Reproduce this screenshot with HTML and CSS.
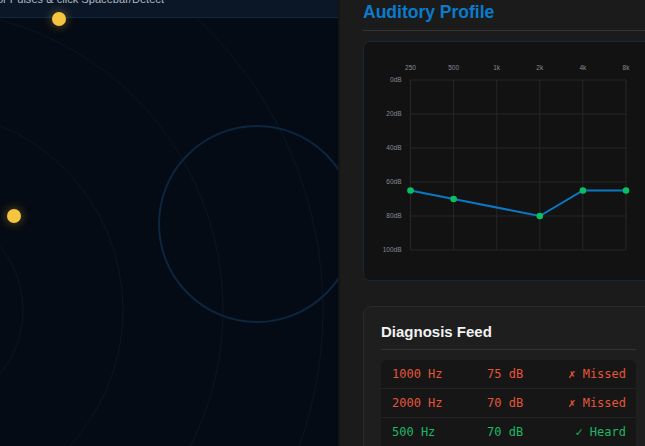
FILE: index.html
```html
<!DOCTYPE html>
<html lang="en">
<head>
    <meta charset="UTF-8">
    <meta name="viewport" content="width=device-width, initial-scale=1.0">
    <title>Hearing Test</title>
    <link rel="stylesheet" href="styles.css">
</head>
<body>

    <div class="app">
        <!-- radar / listening area -->
        <div class="radar">
            <div class="radar-bar">
                <span class="radar-hint">Listen for Pulses &amp; click Spacebar/Detect</span>
            </div>
            <svg class="radar-rings" width="338" height="446" viewBox="0 0 338 446">
                <circle cx="-77" cy="310" r="100" />
                <circle cx="-77" cy="310" r="200" />
                <circle cx="-77" cy="310" r="300" />
                <circle cx="-77" cy="310" r="400" />
                <circle class="target" cx="257" cy="224" r="98" />
            </svg>
            <div class="pulse" style="left: 52px; top: 12px;"></div>
            <div class="pulse" style="left: 7px; top: 209px;"></div>
        </div>

        <div class="side">
            <h2 class="side-title">Auditory Profile</h2>

            <div class="chart-card">
                <svg class="chart" width="290" height="238" viewBox="0 0 290 238">
                    <g class="grid">
                        <line x1="46.5" y1="38" x2="46.5" y2="208" />
                        <line x1="89.6" y1="38" x2="89.6" y2="208" />
                        <line x1="132.7" y1="38" x2="132.7" y2="208" />
                        <line x1="175.8" y1="38" x2="175.8" y2="208" />
                        <line x1="218.9" y1="38" x2="218.9" y2="208" />
                        <line x1="262" y1="38" x2="262" y2="208" />
                        <line x1="46.5" y1="38" x2="262" y2="38" />
                        <line x1="46.5" y1="72" x2="262" y2="72" />
                        <line x1="46.5" y1="106" x2="262" y2="106" />
                        <line x1="46.5" y1="140" x2="262" y2="140" />
                        <line x1="46.5" y1="174" x2="262" y2="174" />
                        <line x1="46.5" y1="208" x2="262" y2="208" />
                    </g>
                    <g class="xlabels">
                        <text x="46.5" y="26">250</text>
                        <text x="89.6" y="26">500</text>
                        <text x="132.7" y="26">1k</text>
                        <text x="175.8" y="26">2k</text>
                        <text x="218.9" y="26">4k</text>
                        <text x="262" y="26">8k</text>
                    </g>
                    <g class="ylabels">
                        <text x="37.5" y="38">0dB</text>
                        <text x="37.5" y="72">20dB</text>
                        <text x="37.5" y="106">40dB</text>
                        <text x="37.5" y="140">60dB</text>
                        <text x="37.5" y="174">80dB</text>
                        <text x="37.5" y="208">100dB</text>
                    </g>
                    <polyline class="curve" points="46.5,148.5 89.6,157 175.8,174 218.9,148.5 262,148.5" />
                    <g class="points">
                        <circle cx="46.5" cy="148.5" r="3.3" />
                        <circle cx="89.6" cy="157" r="3.3" />
                        <circle cx="175.8" cy="174" r="3.3" />
                        <circle cx="218.9" cy="148.5" r="3.3" />
                        <circle cx="262" cy="148.5" r="3.3" />
                    </g>
                </svg>
            </div>

            <div class="feed-card">
                <h3 class="feed-title">Diagnosis Feed</h3>
                <div class="feed">
                    <div class="feed-row missed">
                        <span>1000 Hz</span>
                        <span>75 dB</span>
                        <span class="status">✗ Missed</span>
                    </div>
                    <div class="feed-row missed">
                        <span>2000 Hz</span>
                        <span>70 dB</span>
                        <span class="status">✗ Missed</span>
                    </div>
                    <div class="feed-row heard">
                        <span>500 Hz</span>
                        <span>70 dB</span>
                        <span class="status">✓ Heard</span>
                    </div>
                    <div class="feed-row heard">
                        <span>250 Hz</span>
                        <span>65 dB</span>
                        <span class="status">✓ Heard</span>
                    </div>
                </div>
            </div>
        </div>
    </div>

</body>
</html>
```

FILE: styles.css
```css
body {
    margin: 0;
    background-color: #1b1b1b;
    font-family: "Liberation Sans", Arial, sans-serif;
    overflow: hidden;
}
.app {
    display: grid;
    grid-template-columns: 340px 337px;
    height: 446px;
}

/* left: listening radar */
.radar {
    position: relative;
    background-color: #050b14;
    border-right: 2px solid #141414;
    overflow: hidden;
}
.radar-bar {
    position: relative;
    z-index: 1;
    display: flex;
    align-items: flex-start;
    height: 17px;
    background-color: #0b1627;
    border-bottom: 1px solid #0e2840;
}
.radar-hint {
    display: flex;
    justify-content: flex-end;
    flex: none;
    width: 164px;
    margin-top: -7px;
    font-size: 11.1px;
    line-height: 12px;
    color: #b0b7c2;
    white-space: nowrap;
}
.radar-rings {
    position: absolute;
    left: 0;
    top: 0;
}
.radar-rings circle {
    fill: none;
    stroke: #0c1522;
    stroke-width: 1;
}
.radar-rings .target {
    stroke: #0b2640;
    stroke-width: 2;
}
.pulse {
    position: absolute;
    z-index: 2;
    width: 14px;
    height: 14px;
    border-radius: 50%;
    background-color: #f6c53f;
    box-shadow: 0 0 8px 2px rgba(246, 197, 63, 0.25);
}

/* right: profile + feed */
.side {
    padding: 2px 23px 0 23px;
}
.side-title {
    margin: 0;
    padding-bottom: 8px;
    font-size: 17.5px;
    line-height: 20px;
    color: #0a7bcc;
    border-bottom: 1px solid #333;
}
.chart-card {
    margin-top: 10px;
    height: 238px;
    background-color: #121212;
    border: 1px solid #16293a;
    border-radius: 7px;
}
.chart {
    display: block;
}
.grid line {
    stroke: #262626;
    stroke-width: 1;
}
.xlabels text, .ylabels text {
    font-size: 6.5px;
    fill: #858b95;
    dominant-baseline: middle;
}
.xlabels text {
    text-anchor: middle;
}
.ylabels text {
    text-anchor: end;
}
.curve {
    fill: none;
    stroke: #0a78c4;
    stroke-width: 2;
}
.points circle {
    fill: #08c060;
}

.feed-card {
    margin-top: 25px;
    padding: 16px 17px;
    background-color: #1e1e1e;
    border: 1px solid #2a2a2a;
    border-radius: 9px;
}
.feed-title {
    margin: 0;
    padding-bottom: 8px;
    font-size: 15px;
    line-height: 18px;
    color: #f2f2f2;
    border-bottom: 1px solid #333;
}
.feed {
    margin-top: 10px;
    background-color: #161616;
    border-radius: 6px;
}
.feed-row {
    display: grid;
    grid-template-columns: 95px 1fr auto;
    height: 28px;
    align-items: center;
    padding: 0 10px 0 11px;
    border-bottom: 1px solid #222;
    font-family: "DejaVu Sans Mono", "Liberation Mono", monospace;
    font-size: 12px;
}
.missed {
    color: #e4553a;
}
.heard {
    color: #1bb866;
}
```
